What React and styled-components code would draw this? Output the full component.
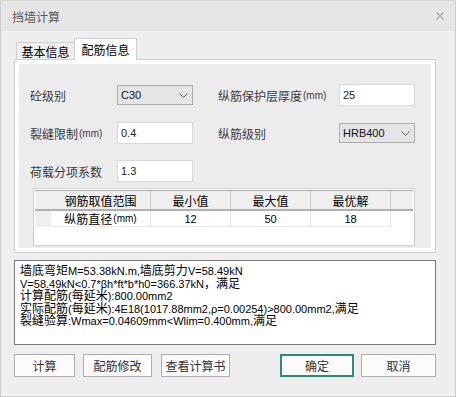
import React from 'react'
import styled, { createGlobalStyle } from 'styled-components'

const cjk = '"Noto Sans CJK SC", sans-serif'
const latin = '"Liberation Sans", "Noto Sans CJK SC", sans-serif'

const GlobalStyle = createGlobalStyle`
  html, body {
    margin: 0;
    padding: 0;
    background: #f0f0f0;
  }
  * {
    box-sizing: border-box;
  }
`

// CJK runs render a touch larger than the latin text around them
const Han = styled.span`
  font-family: ${cjk};
  font-size: 12px;
  line-height: 12px;
`

const Mixed = ({ text }) =>
  text.split(/([\u2E80-\u9FFF\uFF00-\uFFEF]+)/).map((part, i) =>
    /[\u2E80-\u9FFF\uFF00-\uFFEF]/.test(part) ? <Han key={i}>{part}</Han> : part
  )

// labels carry a small "(mm)" unit after the CJK text
const Unit = styled.span`
  font-family: ${latin};
  font-size: 10px;
  margin-left: 1px;
`

function App() {
  return (
    <Window>
      <GlobalStyle />
      <TitleBar>
        <span>挡墙计算</span>
        <svg width="8" height="8" viewBox="0 0 8 8">
          <path d="M0.5 0.5 L7.5 7.5 M7.5 0.5 L0.5 7.5" stroke="#a8a8a8" strokeWidth="1.3" />
        </svg>
      </TitleBar>
      <Body>
        <Inner>
          <TabStrip>
            <Tab>基本信息</Tab>
            <Tab $active>配筋信息</Tab>
          </TabStrip>
          <Panel>
            <PanelBody>
              <Form>
                <Label>砼级别</Label>
                <Select>
                  <span>C30</span>
                  <Chevron />
                </Select>
                <Label $indent>纵筋保护层厚度<Unit>(mm)</Unit></Label>
                <Input>25</Input>

                <Label>裂缝限制<Unit>(mm)</Unit></Label>
                <Input>0.4</Input>
                <Label $indent>纵筋级别</Label>
                <Select>
                  <span>HRB400</span>
                  <Chevron />
                </Select>

                <Label>荷载分项系数</Label>
                <Input>1.3</Input>
              </Form>

              <Table>
                <HeaderRow>
                  <Corner />
                  <HeadCell $w={100}>钢筋取值范围</HeadCell>
                  <HeadCell $w={80}>最小值</HeadCell>
                  <HeadCell $w={80}>最大值</HeadCell>
                  <HeadCell $w={80}>最优解</HeadCell>
                  <HeadFill />
                </HeaderRow>
                <DataRow>
                  <RowHead />
                  <Cell $w={100}><Han>纵筋直径</Han><Unit>(mm)</Unit></Cell>
                  <Cell $w={80}>12</Cell>
                  <Cell $w={80}>50</Cell>
                  <Cell $w={80}>18</Cell>
                </DataRow>
              </Table>
            </PanelBody>
          </Panel>

          <Output>
            <Line><Mixed text="墙底弯矩M=53.38kN.m,墙底剪力V=58.49kN" /></Line>
            <Line><Mixed text="V=58.49kN<0.7*βh*ft*b*h0=366.37kN，满足" /></Line>
            <Line><Mixed text="计算配筋(每延米):800.00mm2" /></Line>
            <Line><Mixed text="实际配筋(每延米):4E18(1017.88mm2,ρ=0.00254)>800.00mm2,满足" /></Line>
            <Line><Mixed text="裂缝验算:Wmax=0.04609mm<Wlim=0.400mm,满足" /></Line>
          </Output>

          <ButtonRow>
            <ButtonGroup>
              <Button $w={61}>计算</Button>
              <Button $w={69} style={{ marginLeft: 8 }}>配筋修改</Button>
              <Button $w={69} style={{ marginLeft: 9 }}>查看计算书</Button>
            </ButtonGroup>
            <ButtonGroup>
              <Button $w={74} $primary>确定</Button>
              <Button $w={75} style={{ marginLeft: 7 }}>取消</Button>
            </ButtonGroup>
          </ButtonRow>
        </Inner>
      </Body>
    </Window>
  )
}

const Chevron = () => (
  <svg width="9" height="5" viewBox="0 0 9 5">
    <path d="M0.5 0.5 L4.5 4.5 L8.5 0.5" fill="none" stroke="#555" strokeWidth="1" />
  </svg>
)

const Window = styled.div`
  width: 456px;
  height: 397px;
  display: flex;
  flex-direction: column;
  border: 1px solid #cdcdcd;
  border-top-color: #dadada;
  background: #f0f0f0;
  font-family: ${latin};
  font-size: 11px;
  color: #000;
`

const TitleBar = styled.div`
  height: 30px;
  flex-shrink: 0;
  display: flex;
  align-items: center;
  justify-content: space-between;
  padding: 0 11px 0 11px;
  background: #e6e6e6;
  font-family: ${cjk};
  font-size: 12px;
  color: #555;
  svg {
    display: block;
  }
`

const Body = styled.div`
  flex: 1;
  display: flex;
  padding: 1px 7px 3px 7px;
`

const Inner = styled.div`
  flex: 1;
  display: flex;
  flex-direction: column;
  padding: 6px 12px 0 6px;
  background: #eeeeee;
`

const TabStrip = styled.div`
  height: 21px;
  display: flex;
  align-items: flex-end;
  padding-left: 2px;
  position: relative;
  z-index: 1;
`

const Tab = styled.div`
  display: flex;
  align-items: center;
  justify-content: center;
  width: ${p => (p.$active ? 63 : 59)}px;
  height: ${p => (p.$active ? 22 : 17)}px;
  margin-bottom: ${p => (p.$active ? -1 : 0)}px;
  margin-left: ${p => (p.$active ? -1 : 0)}px;
  border: 1px solid #d0d0d0;
  border-bottom: none;
  background: ${p => (p.$active ? '#fff' : '#eeeeee')};
  font-family: ${cjk};
  font-size: 12px;
  color: #000;
`

const Panel = styled.div`
  height: 194px;
  display: flex;
  padding: 4px;
  border: 1px solid #d0d0d0;
  background: #fff;
`

const PanelBody = styled.div`
  flex: 1;
  padding: 20px 0 0 11px;
  background: #ececec;
`

const Form = styled.div`
  display: grid;
  grid-template-columns: 87px 76px 146px 76px;
  grid-auto-rows: 22px;
  row-gap: 16px;
`

const Label = styled.div`
  display: flex;
  align-items: center;
  padding-left: ${p => (p.$indent ? 25 : 0)}px;
  font-family: ${cjk};
  font-size: 12px;
  color: #3a3a3a;
  white-space: nowrap;
`

const Input = styled.div`
  display: flex;
  align-items: center;
  padding-left: 3px;
  border: 1px solid #d9d9d9;
  background: #fff;
  font-family: ${latin};
  font-size: 11px;
  color: #222;
`

const Select = styled.div`
  align-self: center;
  height: 20px;
  display: flex;
  align-items: center;
  justify-content: space-between;
  padding: 0 4px 0 3px;
  border: 1px solid #adadad;
  background: #e5e5e5;
  font-family: ${latin};
  font-size: 11px;
  color: #111;
  svg {
    display: block;
  }
`

const Table = styled.div`
  width: 382px;
  height: 58px;
  margin: 6px 0 0 3px;
  padding: 1px;
  border: 1px solid #cfcfcf;
  background: #fff;
  font-size: 11px;
`

const HeaderRow = styled.div`
  height: 21px;
  display: flex;
  border-top: 1px solid #a9a9a9;
  border-bottom: 2px solid #b0b0b0;
  background: #efefef;
`

const Corner = styled.div`
  width: 16px;
`

const HeadCell = styled.div`
  width: ${p => p.$w}px;
  display: flex;
  align-items: center;
  justify-content: center;
  border-right: 1px solid #cfcfcf;
  font-family: ${cjk};
  font-size: 12px;
  color: #000;
`

const HeadFill = styled.div`
  flex: 1;
`

const DataRow = styled.div`
  height: 16px;
  display: flex;
`

const RowHead = styled.div`
  width: 16px;
  background: #efefef;
`

const Cell = styled.div`
  width: ${p => p.$w}px;
  display: flex;
  align-items: center;
  justify-content: center;
  border-right: 1px solid #e6e6e6;
  border-bottom: 1px solid #e6e6e6;
  font-family: ${latin};
  font-size: 11px;
  color: #000;
`

const Output = styled.div`
  height: 85px;
  margin-top: 7px;
  padding: 3px 5px;
  border: 1px solid #7a7a7a;
  background: #fff;
  font-family: ${latin};
  font-size: 11px;
  color: #000;
`

const Line = styled.div`
  height: 12.5px;
  line-height: 12.5px;
  white-space: nowrap;
`

const ButtonRow = styled.div`
  margin-top: 9px;
  display: flex;
  justify-content: space-between;
`

const ButtonGroup = styled.div`
  display: flex;
`

const Button = styled.div`
  width: ${p => p.$w}px;
  height: 23px;
  display: flex;
  align-items: center;
  justify-content: center;
  border: ${p => (p.$primary ? '2px solid #2e8b7a' : '1px solid #adadad')};
  background: #fbfbfb;
  font-family: ${cjk};
  font-size: 12px;
  color: #333;
`

export default App
